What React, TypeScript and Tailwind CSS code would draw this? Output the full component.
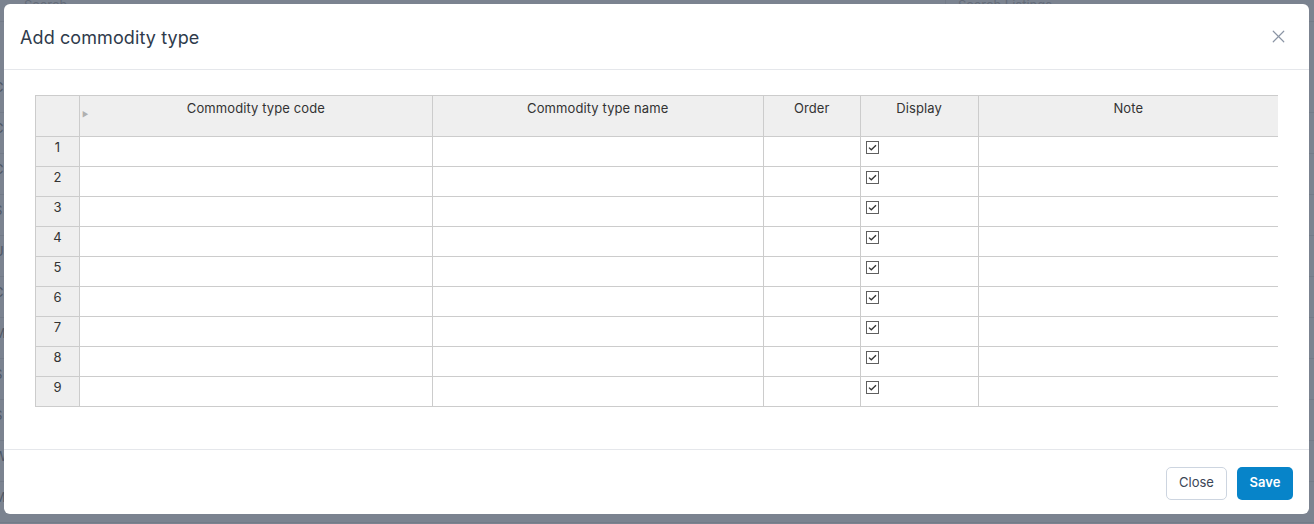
import React from 'react';
import { X } from 'lucide-react';

const columns = [
  { key: 'code', label: 'Commodity type code', width: 'w-[353px]' },
  { key: 'name', label: 'Commodity type name', width: 'w-[331px]' },
  { key: 'order', label: 'Order', width: 'w-[97px]' },
  { key: 'display', label: 'Display', width: 'w-[118px]' },
  { key: 'note', label: 'Note', width: 'w-[300px]' },
];

const rows = [1, 2, 3, 4, 5, 6, 7, 8, 9];

const sideItems = ['C', 'C', 'C', 'S', 'U', 'C', 'M', 'S', 'S', 'W', 'M'];

const CheckBox: React.FC = () => (
  <svg width="13" height="13" viewBox="0 0 13 13" className="block">
    <rect x="0.5" y="0.5" width="12" height="12" fill="#fff" stroke="#5f5f5f" />
    <path d="M3 6.6 L5.3 8.8 L10 4.2" fill="none" stroke="#333" strokeWidth="1.3" />
  </svg>
);

export default function App() {
  return (
    <div className="relative h-[524px] w-full overflow-hidden bg-[#7b8390] font-['Inter',sans-serif]">
      {/* page behind the dim overlay */}
      <div className="flex h-[22px] items-start border-b border-[#737b88]">
        <div className="w-[355px] pl-6 text-[13px] leading-[10px] text-[#646c79]">Search</div>
        <div className="ml-[590px] w-[220px] border-l border-[#737b88] pl-3 text-[13px] leading-[10px] text-[#646c79]">
          Search Listings
        </div>
      </div>
      <div className="flex flex-col pt-[50px]">
        {sideItems.map((s, i) => (
          <div
            key={i}
            className={`h-[41px] border-b border-[#737b88] text-[13px] leading-[30px] text-[#4e5766] -ml-[6px] ${
              i === 1 ? 'text-[#4a4f9a]' : ''
            }`}
          >
            {s}
          </div>
        ))}
      </div>

      {/* modal */}
      <div className="absolute left-[4px] top-[4px] flex h-[510px] w-[1305px] flex-col rounded-md bg-white">
        <div className="flex h-[66px] items-center justify-between border-b border-[#e5e7eb] pl-4 pr-5">
          <h2 className="pt-[2px] text-[18px] font-normal tracking-[0.1px] text-[#2f3b4c]">Add commodity type</h2>
          <X size={21} strokeWidth={1.4} className="text-[#8b95a5]" />
        </div>

        <div className="flex-1 pl-[31px] pr-[31px] pt-[25px]">
          <table className="border-collapse table-fixed text-[13px] text-[#333]">
            <thead>
              <tr className="h-[41px] bg-[#efefef]">
                <th className="w-[44px] border border-[#cccccc] p-0" />
                {columns.map((c, i) => (
                  <th
                    key={c.key}
                    className={`${c.width} relative border-y border-l border-[#cccccc] ${
                      i === columns.length - 1 ? 'border-r-0' : 'border-r'
                    } px-1 pb-[15px] pt-[3px] align-top text-center font-normal tracking-[0.1px]`}
                  >
                    {i === 0 && (
                      <span className="absolute left-[2px] top-[14px] text-[7px] text-[#b0b0b0]">▶</span>
                    )}
                    {c.label}
                  </th>
                ))}
              </tr>
            </thead>
            <tbody>
              {rows.map((r) => (
                <tr key={r} className="h-[30px]">
                  <td className="border border-[#cccccc] bg-[#efefef] pt-[1px] text-center align-top">{r}</td>
                  {columns.map((c, i) => (
                    <td
                      key={c.key}
                      className={`border-y border-l border-[#cccccc] ${
                        i === columns.length - 1 ? 'border-r-0' : 'border-r'
                      } px-[5px] pt-[4px] align-top`}
                    >
                      {c.key === 'display' && <CheckBox />}
                    </td>
                  ))}
                </tr>
              ))}
            </tbody>
          </table>
        </div>

        <div className="flex h-[65px] items-center justify-end gap-[10px] border-t border-[#e5e7eb] pr-4">
          <button className="mt-[2px] h-[33px] w-[61px] rounded-[5px] border border-[#cdd5e0] bg-white text-[13px] text-[#3b4656]">
            Close
          </button>
          <button className="mt-[2px] h-[33px] w-[56px] rounded-[5px] bg-[#0784c9] text-[13px] font-semibold text-white">
            Save
          </button>
        </div>
      </div>
    </div>
  );
}
